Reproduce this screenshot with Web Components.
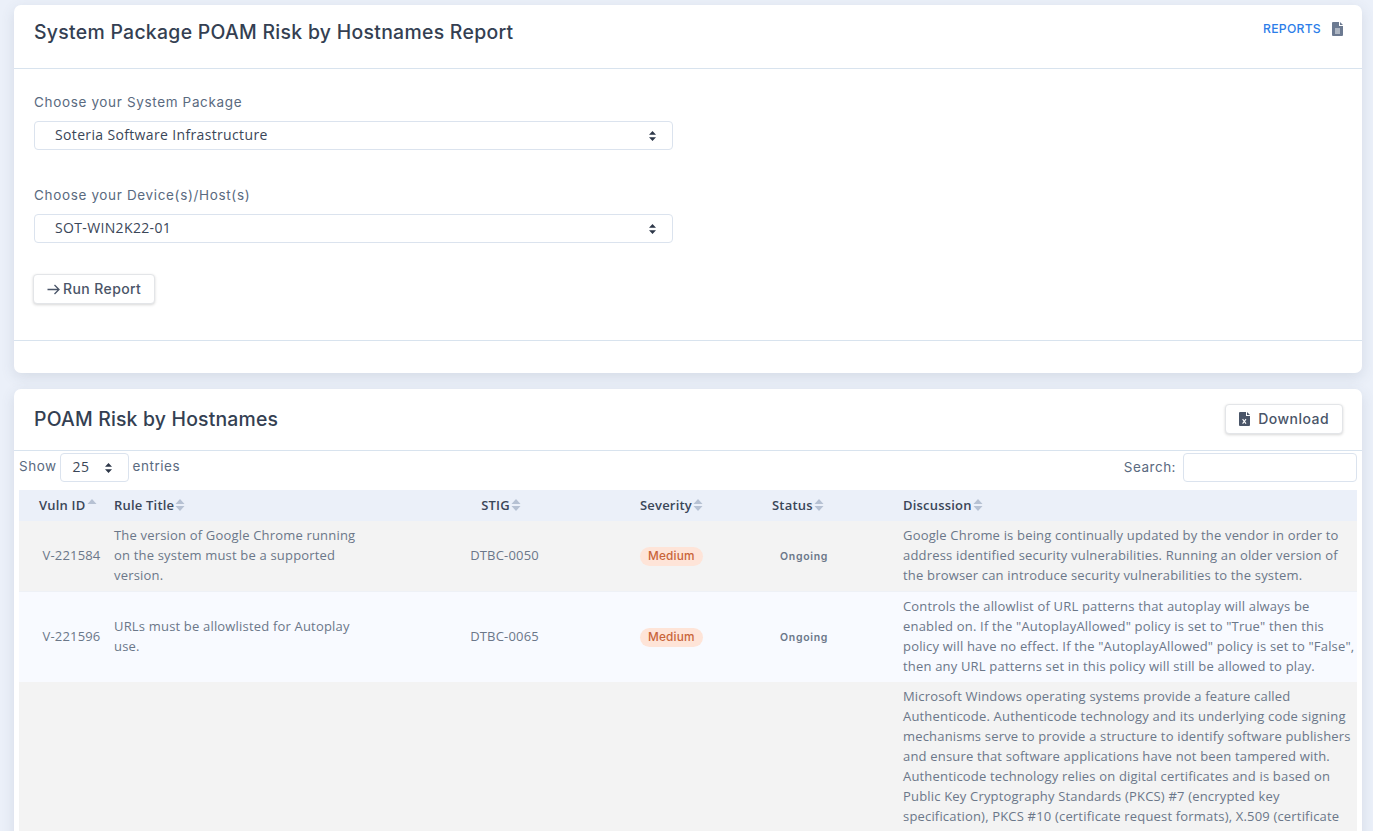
<!DOCTYPE html>
<html lang="en"><head><meta charset="utf-8"><title>POAM Risk</title>
<style>
html,body{margin:0;height:831px;overflow:hidden;background:#ebf0f9;font-family:Inter,"Liberation Sans",sans-serif}
body{padding:5px 11px 0 14px;box-sizing:border-box;display:flex;flex-direction:column;gap:16px}
</style></head><body>
<report-card title-text="System Package POAM Risk by Hostnames Report" style="--hh:63px;--pb:0px;--ty:-5px;--ls:.3px">
  <reports-link slot="action"></reports-link>
  <report-form></report-form>
</report-card>
<report-card title-text="POAM Risk by Hostnames" style="--hh:59px;--pb:2px;--ty:0px;--ls:.19px">
  <action-button slot="action" icon="xls" label="Download"></action-button>
  <poam-table></poam-table>
</report-card>
<script>
const HEAD='Inter,"Liberation Sans",sans-serif', BODY='"Open Sans","Noto Sans",sans-serif';
const def=(n,html)=>customElements.define(n,class extends HTMLElement{
  connectedCallback(){ if(this.shadowRoot)return; const r=this.attachShadow({mode:'open'}); r.innerHTML=typeof html==='function'?html(this):html; }
});
const sel=(w,h,pad,size,val)=>`<span class="sel" style="width:${w}px;height:${h}px;padding-left:${pad}px;font-size:${size}px"><span class="v">${val}</span><svg width="9" height="12" viewBox="0 0 9 12"><path d="M4.5 1 8 4.7H1zM4.5 11 1 7.3h7z" fill="#2d3748"/></svg></span>`;
const SELCSS=`.sel{display:flex;align-items:center;justify-content:space-between;box-sizing:border-box;border:1px solid #dbe3ee;border-radius:4px;background:#fff;color:#3a4658;padding-right:15px;letter-spacing:.35px;font-family:${BODY}}.sel .v{margin-bottom:2px}`;

def('report-card',el=>`<style>
:host{display:block;background:#fff;border-radius:7px;box-shadow:0 4px 14px rgba(60,75,100,.13);flex:none}
header{height:var(--hh);display:flex;justify-content:space-between;align-items:center;padding:0 19px var(--pb) 20px;border-bottom:1px solid #d8e3ee}
h2{margin:0;font:500 19.4px ${HEAD};color:#343f52;letter-spacing:var(--ls);transform:translateY(var(--ty))}
.a{display:flex}
</style><header><h2>${el.getAttribute('title-text')}</h2><div class="a"><slot name="action"></slot></div></header><slot></slot>`);

def('reports-link',`<style>
:host{display:flex;align-items:center;gap:11px;transform:translateY(-8px);font:500 12.2px ${HEAD};letter-spacing:.25px;color:#2b7de9}
svg{display:block}
</style>REPORTS<svg width="11" height="14" viewBox="0 0 11 14"><path d="M1 0h6v4h4v9a1 1 0 0 1-1 1H1a1 1 0 0 1-1-1V1a1 1 0 0 1 1-1z" fill="#6c7a91"/><path d="M8 0l3 3H8z" fill="#6c7a91"/><path d="M3 7h5M3 9h5M3 11h5" stroke="#fff" stroke-width=".9"/></svg>`);

def('action-button',el=>{
 const xls=el.getAttribute('icon')==='xls';
 const ic=xls?`<svg width="11" height="14" viewBox="0 0 11 14"><path d="M1 0h6v4h4v9a1 1 0 0 1-1 1H1a1 1 0 0 1-1-1V1a1 1 0 0 1 1-1z" fill="#4a5568"/><path d="M8 0l3 3H8z" fill="#4a5568"/><path d="M3.6 7.2l3.4 4.4M7 7.2l-3.4 4.4" stroke="#fff" stroke-width="1.1"/></svg>`
 :`<svg width="13" height="11" viewBox="0 0 13 11"><path d="M0.5 5.5h11M7.5 1l4.5 4.5L7.5 10" fill="none" stroke="#4a5568" stroke-width="1.3"/></svg>`;
 return `<style>
:host{display:inline-flex;align-items:center;gap:${xls?8:3}px;box-sizing:border-box;height:30px;padding:0 13px 1px;background:#fff;border:1px solid #e3e5e8;border-radius:4px;box-shadow:0 1px 3px rgba(0,0,0,.16);font:500 14px ${HEAD};letter-spacing:${xls?.45:.4}px;color:#4a5568}
svg{margin-top:1px}
</style>${ic}${el.getAttribute('label')}`});

def('report-form',`<style>
:host{display:block}
.body{padding:25px 20px 0;height:272px;box-sizing:border-box;border-bottom:1px solid #d8e3ee;display:flex;flex-direction:column;align-items:flex-start}
label{font:400 13.5px/16px ${HEAD};color:#5a6a80;letter-spacing:.65px;margin-bottom:11px}
${SELCSS}
.g{margin-bottom:37px}
action-button{margin-left:-1px}
.foot{height:32px}
</style><div class="body">
<label>Choose your System Package</label>
<div class="g">${sel(639,29,20,14,'Soteria Software Infrastructure')}</div>
<label>Choose your Device(s)/Host(s)</label>
<div class="g" style="margin-bottom:31px">${sel(639,29,20,14,'SOT-WIN2K22-01')}</div>
<action-button icon="arrow" label="Run Report"></action-button>
</div><div class="foot"></div>`);

def('severity-badge',`<style>:host{display:inline-block;background:#fee4d8;color:#c9643a;border-radius:10px;font:500 11.8px/19px ${HEAD};letter-spacing:.2px;padding:0 8px}</style><slot></slot>`);

const sort=(up=true,dn=true)=>`<svg width="10" height="14" viewBox="0 0 10 14"><path d="M5 1l4.5 5H.5z" fill="${up?'#b6c1d3':'none'}"/><path d="M5 13 .5 8h9z" fill="${dn?'#b6c1d3':'none'}"/></svg>`;
const ROWS=[
 ['V-221584','The version of Google Chrome running on the system must be a supported version.','DTBC-0050','Google Chrome is being continually updated by the vendor in order to address identified security vulnerabilities. Running an older version of the browser can introduce security vulnerabilities to the system.'],
 ['V-221596','URLs must be allowlisted for Autoplay use.','DTBC-0065','Controls the allowlist of URL patterns that autoplay will always be enabled on. If the "AutoplayAllowed" policy is set to "True" then this policy will have no effect. If the "AutoplayAllowed" policy is set to "False", then any URL patterns set in this policy will still be allowed to play.'],
];
const LONG='Microsoft Windows operating systems provide a feature called Authenticode. Authenticode technology and its underlying code signing mechanisms serve to provide a structure to identify software publishers and ensure that software applications have not been tampered with. Authenticode technology relies on digital certificates and is based on Public Key Cryptography Standards (PKCS) #7 (encrypted key specification), PKCS #10 (certificate request formats), X.509 (certificate';
def('poam-table',`<style>
:host{display:block;padding:2px 5px 0;font:400 13px/20px ${BODY};letter-spacing:.18px;color:#6b7789}
.top{display:flex;justify-content:space-between;align-items:center;height:29px;margin-bottom:8px;color:#5a6a80;font:400 13.5px ${HEAD};letter-spacing:.5px}
.l,.r{display:flex;align-items:center}
.l{gap:3px}.r{gap:7px}
.t{margin-bottom:3px}
.t.e{margin-left:1px;letter-spacing:.55px}
.r .t{margin-bottom:2px}
${SELCSS}
.in{width:174px;height:29px;box-sizing:border-box;border:1px solid #dbe3ee;border-radius:4px}
table{border-collapse:collapse;table-layout:fixed;width:1338px}
th{background:#ebf0f9;height:31px;padding:0 8px 2px;font:600 13px ${BODY};letter-spacing:.2px;color:#3a4658;text-align:left;box-sizing:border-box}
th span{display:inline-flex;align-items:center;gap:1px}
td{padding:4px 2px 6px 8px;vertical-align:middle}
tr.a td{background:#f3f3f3}
tr.b td{background:#f8faff;border-top:1px solid #eef1f6}
.c{text-align:center}
td.id{padding-left:18px;padding-right:0}
td.stig{padding-right:9px}
.rt div{width:250px}
td.st{padding-left:16px}
.on{font:600 10.5px ${HEAD};letter-spacing:.7px;color:#6b7789}
tr.long td{vertical-align:top;height:400px}
</style>
<div class="top"><div class="l"><span class="t">Show</span> ${sel(69,29,12,14,'25')} <span class="t e">entries</span></div><div class="r"><span class="t">Search:</span> <div class="in"></div></div></div>
<table><colgroup><col style="width:87px"><col style="width:272px"><col style="width:254px"><col style="width:132px"><col style="width:131px"><col></colgroup>
<thead><tr>
<th style="padding-left:20px"><span>Vuln ID${sort(true,false)}</span></th><th><span>Rule Title${sort()}</span></th><th class="c" style="padding-right:16px"><span>STIG${sort()}</span></th><th><span>Severity${sort()}</span></th><th><span>Status${sort()}</span></th><th><span>Discussion${sort()}</span></th>
</tr></thead><tbody>
${ROWS.map((r,i)=>`<tr class="${i%2?'b':'a'}"><td class="c id">${r[0]}</td><td class="rt"><div>${r[1]}</div></td><td class="c stig">${r[2]}</td><td><severity-badge>Medium</severity-badge></td><td class="st"><span class="on">Ongoing</span></td><td>${r[3]}</td></tr>`).join('')}
<tr class="a long"><td></td><td></td><td></td><td></td><td></td><td>${LONG}</td></tr>
</tbody></table>`);
</script>
</body></html>
